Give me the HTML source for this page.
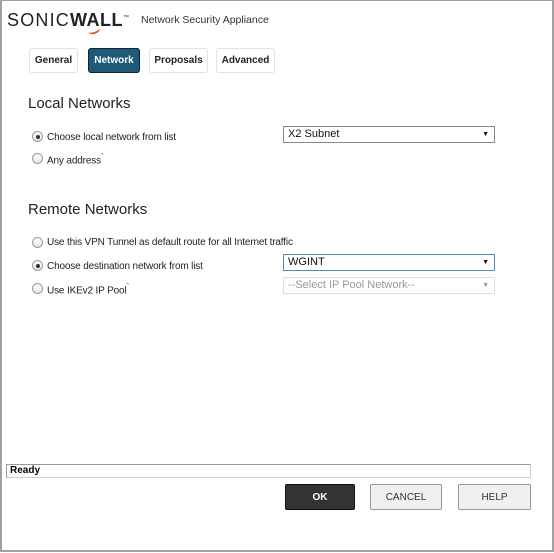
<html><head><style>
body{margin:0;width:554px;height:553px;overflow:hidden;background:#fff;font-family:"Liberation Sans",Arial,sans-serif;}
.frame{position:absolute;left:0;top:0;width:550px;height:549px;border:2px solid #a0a0a0;border-top:1px solid #a0a0a0;}
.a{position:absolute;}
.tab{position:absolute;top:48px;height:23px;border:1px solid #e2e2e2;border-radius:3px;font-size:10px;font-weight:bold;line-height:23px;text-align:center;color:#222;background:#fff;}
.h{position:absolute;font-size:15px;color:#222;}
.r{position:absolute;width:9px;height:9px;border:1px solid #999;border-radius:50%;background:linear-gradient(#fff,#e6e6e6);}
.r.on::after{content:"";position:absolute;left:2.5px;top:2.5px;width:4px;height:4px;border-radius:50%;background:#333;}
.l{position:absolute;font-size:10px;letter-spacing:-0.15px;color:#222;}
.sel{position:absolute;left:283px;width:206px;height:15px;border:1px solid #888;font-size:11px;line-height:15px;padding-left:4px;box-sizing:content-box;color:#111;}
.sel::after{content:"▼";position:absolute;right:5px;top:0;font-size:7px;}
.btn{position:absolute;top:484px;height:24px;border:1px solid #999;background:#f0f0f0;font-size:10px;line-height:25px;text-align:center;color:#333;border-radius:2px;}
</style></head><body>
<div class="frame"></div>
<div class="a" style="left:7px;top:10px;font-size:18px;letter-spacing:1.2px;color:#222;">SONIC<span style="font-weight:bold;letter-spacing:0.5px;">WALL</span><sup style="font-size:6px">™</sup></div>
<div class="a" style="left:88px;top:26px;width:12px;height:6px;border-bottom:2px solid #e05a1a;border-radius:0 0 50% 50%;transform:rotate(-20deg);"></div>
<div class="a" style="left:141px;top:14px;font-size:10.5px;color:#333;">Network Security Appliance</div>
<div class="tab" style="left:29px;width:47px;">General</div>
<div class="tab" style="left:88px;width:50px;background:#1f5a7a;color:#fff;border-color:#123;">Network</div>
<div class="tab" style="left:149px;width:57px;">Proposals</div>
<div class="tab" style="left:216px;width:57px;">Advanced</div>
<div class="h" style="left:28px;top:95px;">Local Networks</div>
<div class="r on" style="left:32px;top:131px;"></div><div class="l" style="left:47px;top:132px;">Choose local network from list</div>
<div class="sel" style="top:126px;">X2 Subnet</div>
<div class="r" style="left:32px;top:153px;"></div><div class="l" style="left:47px;top:154px;">Any address<sup style="font-size:7px">˺</sup></div>
<div class="h" style="left:28px;top:201px;">Remote Networks</div>
<div class="r" style="left:32px;top:237px;"></div><div class="l" style="left:47px;top:237px;">Use this VPN Tunnel as default route for all Internet traffic</div>
<div class="r on" style="left:32px;top:260px;"></div><div class="l" style="left:47px;top:261px;">Choose destination network from list</div>
<div class="sel" style="top:254px;border-color:#5588bb;">WGINT</div>
<div class="r" style="left:32px;top:283px;"></div><div class="l" style="left:47px;top:284px;">Use IKEv2 IP Pool<sup style="font-size:7px">˺</sup></div>
<div class="sel" style="top:277px;border-color:#ddd;color:#999;">--Select IP Pool Network--</div>
<div class="a" style="left:6px;top:464px;width:520px;height:12px;border:1px solid #ccc;border-top-color:#999;border-left-color:#999;font-size:10px;font-weight:bold;line-height:12px;padding-left:3px;box-sizing:content-box;">Ready</div>
<div class="btn" style="left:285px;width:68px;background:#333;color:#fff;border-color:#111;font-weight:bold;">OK</div>
<div class="btn" style="left:370px;width:70px;">CANCEL</div>
<div class="btn" style="left:458px;width:71px;">HELP</div>
</body></html>
